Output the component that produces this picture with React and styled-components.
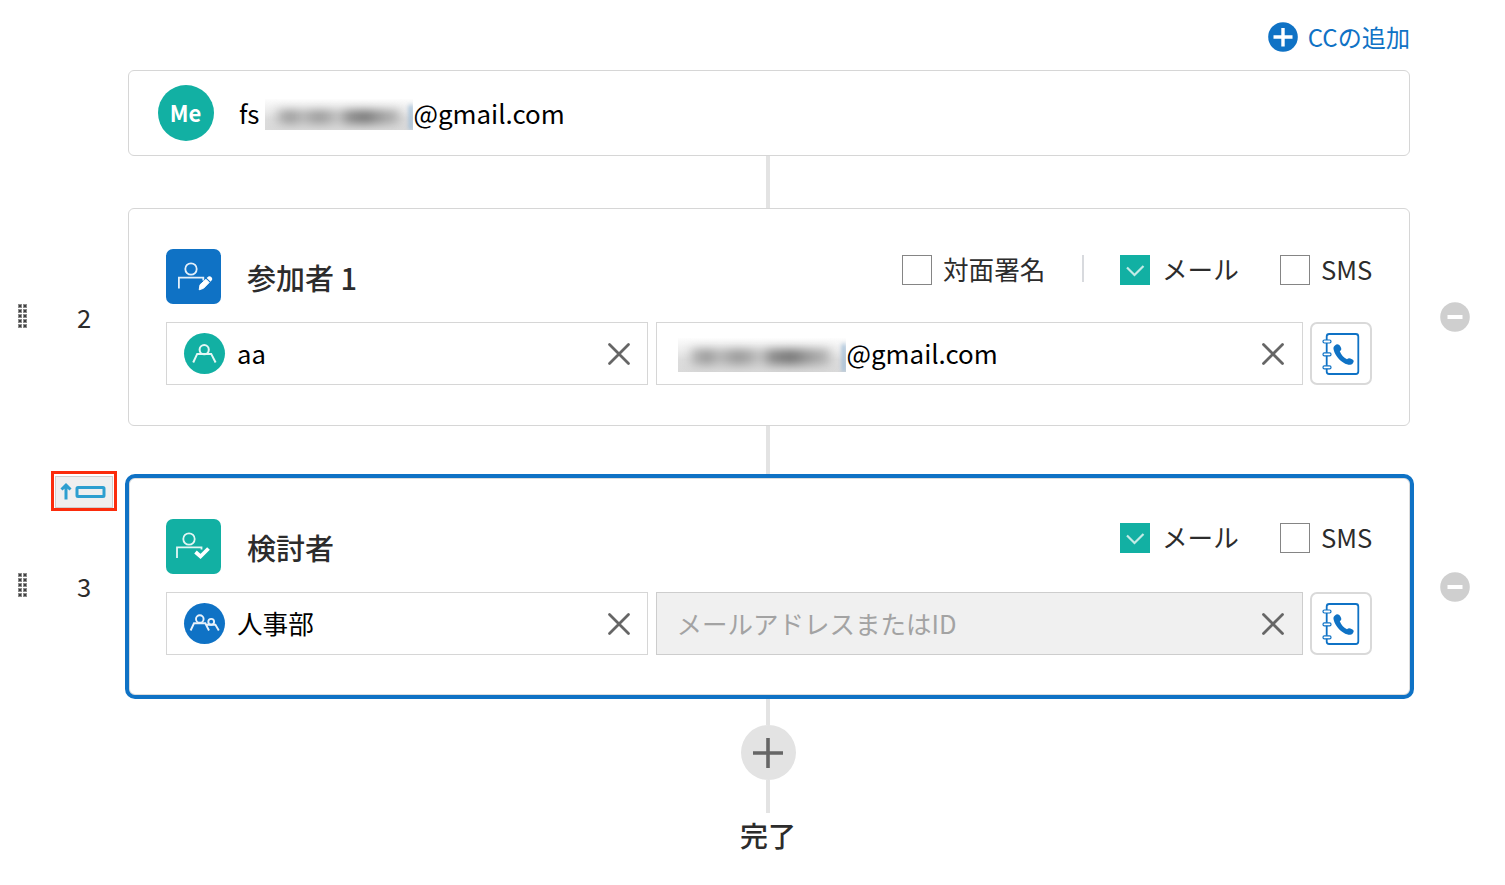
import React from 'react';
import styled, { createGlobalStyle } from 'styled-components';

const BLUE = '#0f72c5';
const TEAL = '#12b0a3';
const LINE = '#d6d6d6';

const GlobalStyle = createGlobalStyle`
  * { box-sizing: border-box; }
  body {
    margin: 0;
    background: #fff;
    color: #2c2c2c;
    font-family: "Noto Sans CJK JP", "Noto Sans", sans-serif;
    font-size: 25.6px;
    line-height: 38px;
  }
  svg { display: block; flex: none; }
`;

const Page = styled.main`
  width: 1505px;
  height: 885px;
  overflow: hidden;
`;

const TopBar = styled.header`
  display: flex;
  justify-content: flex-end;
  height: 70px;
  padding: 18px 95px 0 0;
`;

const AddCc = styled.a`
  display: flex;
  gap: 10px;
  height: 38px;
  align-items: center;
  color: ${BLUE};
  font-size: 24.1px;
`;

const Step = styled.section`
  position: relative;
  display: grid;
  grid-template-columns: 128px 1282px 95px;
  align-items: center;
`;

const Order = styled.div`
  display: flex;
  align-items: center;
  padding-left: 18px;
`;

const Grip = styled.div`
  display: grid;
  grid-template-columns: 4px 4px;
  gap: 1px;
  margin-top: -3px;
`;

const Dot = styled.i`
  width: 4px;
  height: 4px;
  border: 1px solid #8c8c8c;
  background: #3e3e3e;
`;

const StepNumber = styled.span`
  width: 26px;
  margin-left: 44px;
  padding-bottom: 1px;
  text-align: center;
`;

const Card = styled.div`
  grid-column: 2;
  height: ${(p) => p.$height}px;
  margin: ${(p) => (p.$active ? '0 -4px 0 -3px' : '0')};
  padding: ${(p) => (p.$active ? '41px 38px 0 37px' : '40px 37px 0')};
  border: ${(p) => (p.$active ? `4px solid ${BLUE}` : `1px solid ${LINE}`)};
  border-radius: ${(p) => (p.$active ? 10 : 6)}px;
  box-shadow: ${(p) => (p.$active ? 'inset 0 0 0 1px #dcdcdc' : 'none')};
`;

const OwnerCard = styled(Card)`
  display: flex;
  align-items: center;
  padding: 0 29px;
`;

const Avatar = styled.div`
  display: grid;
  place-items: center;
  flex: none;
  width: ${(p) => p.$size}px;
  height: ${(p) => p.$size}px;
  border-radius: 50%;
  background: ${(p) => p.$color};
  color: #fff;
  font-size: 22px;
  font-weight: 700;
  line-height: 36px;
`;

const Initials = styled.span`
  padding: 0 1px 2px 0;
`;

const OwnerText = styled.div`
  display: flex;
  margin-left: 25px;
  color: #000;
  font-size: 25.9px;
`;

const Redacted = styled.span`
  position: relative;
  width: ${(p) => p.$width}px;
  height: ${(p) => p.$height}px;
  margin: ${(p) => p.$margin};
  overflow: hidden;
  background: linear-gradient(#fdfdfd 0%, #ededed 35%, #dcdcdc 65%, #dadada 100%);
  &::before {
    content: '';
    position: absolute;
    inset: 35% 9% 20% 8%;
    background: linear-gradient(90deg, #bbb 0%, #999 12%, #bbb 20%, #999 34%, #aaa 42%, #c8c8c8 50%, #8c8c8c 58%, #777 72%, #999 84%, #bbb 100%);
    filter: blur(5px);
  }
  &::after {
    content: '';
    position: absolute;
    inset: 20% 0 0 auto;
    width: 4px;
    background: #9dbcd8;
    filter: blur(2px);
  }
`;

const Connector = styled.div`
  width: 4px;
  height: ${(p) => p.$height}px;
  margin-left: 766px;
  background: #e3e3e3;
`;

const CardHead = styled.div`
  display: flex;
  height: 55px;
`;

const RoleIcon = styled.div`
  width: 55px;
  height: 55px;
  border-radius: 7px;
  background: ${(p) => p.$color};
`;

const RoleTitle = styled.h2`
  margin: 7px auto 0 26px;
  font-size: 29px;
  font-weight: 500;
  line-height: 42px;
`;

const Options = styled.div`
  display: flex;
  align-items: center;
  height: 30px;
  margin-top: ${(p) => p.$top}px;
`;

const Option = styled.label`
  display: flex;
  align-items: center;
  gap: ${(p) => p.$gap || 12}px;
  width: ${(p) => p.$width}px;
  height: 30px;
  white-space: nowrap;
`;

const OptionText = styled.span`
  padding-bottom: 3px;
`;

const Box = styled.span`
  display: grid;
  place-items: center;
  flex: none;
  width: 30px;
  height: 30px;
  border: 1px solid ${(p) => (p.$checked ? TEAL : '#858585')};
  background: ${(p) => (p.$checked ? TEAL : '#fff')};
`;

const Divider = styled.i`
  width: 2px;
  height: 27px;
  margin: 0 36px 3px;
  background: #d8dade;
`;

const Fields = styled.div`
  display: grid;
  grid-template-columns: 482px 647px 62px;
  gap: 7.5px;
  height: 63px;
  margin-top: 18px;
`;

const Field = styled.div`
  display: flex;
  align-items: center;
  padding: 0 16.5px 0 ${(p) => p.$left}px;
  border: 1px solid ${(p) => (p.$disabled ? '#cdcdcd' : LINE)};
  background: ${(p) => (p.$disabled ? '#f0f0f0' : '#fff')};
  color: ${(p) => (p.$disabled ? '#a3a3a3' : '#000')};
  > svg { margin-left: auto; }
`;

const FieldText = styled.span`
  display: flex;
  margin-left: ${(p) => p.$left || 0}px;
  padding-bottom: 2px;
  font-size: ${(p) => p.$size || 25.6}px;
`;

const BookButton = styled.button`
  display: grid;
  place-items: center;
  padding: 0;
  border: 2px solid #d9d9d9;
  border-radius: 7px;
  background: #fff;
`;

const Remove = styled.div`
  grid-column: 3;
  margin-left: 30px;
`;

const MoveUp = styled.div`
  position: absolute;
  top: -3px;
  left: 51px;
  display: grid;
  width: 66px;
  height: 40px;
  border: 3px solid #fb2c0c;
  background: #fff;
  padding: 2px 1px 1px;
`;

const MoveUpFace = styled.div`
  border: 1px solid #cfcfcf;
  background: #efefef;
`;

const Finish = styled.footer`
  display: flex;
  flex-direction: column;
  align-items: center;
  width: 1536px;
`;

const FinishLine = styled.i`
  width: 4px;
  height: ${(p) => p.$height}px;
  background: #e3e3e3;
`;

const AddStep = styled.div`
  display: grid;
  place-items: center;
  width: 55px;
  height: 55px;
  border-radius: 50%;
  background: #e3e3e3;
`;

const FinishText = styled.strong`
  margin-top: 1px;
  font-size: 28px;
  font-weight: 500;
  line-height: 42px;
`;

const CircleSign = ({ color, plus }) => (
  <svg width="30" height="30" viewBox="0 0 30 30">
    <circle cx="15" cy="15" r="14.8" fill={color} />
    <path d={plus ? 'M5.5 15H24.5M15 6V24.5' : 'M7.5 15H22.5'} stroke="#fff" strokeWidth={plus ? 3.4 : 4} />
  </svg>
);

const Clear = () => (
  <svg width="24" height="24" viewBox="0 0 24 24" fill="none" stroke="#666" strokeWidth="2.8" strokeLinecap="round">
    <path d="M2.5 2.5 21.5 21.5M21.5 2.5 2.5 21.5" />
  </svg>
);

const Book = () => (
  <svg width="40" height="44" viewBox="0 0 40 44">
    <rect x="5.7" y="2" width="31.6" height="40" rx="2.5" fill="none" stroke={BLUE} strokeWidth="1.8" />
    {[8, 20.8, 33.8].map((y) => (
      <rect key={y} x="2" y={y} width="8" height="3" rx="1.4" fill="#fff" stroke={BLUE} strokeWidth="1.2" />
    ))}
    <path
      fill={BLUE}
      d="M14.2 13.2C16 11.5 18.2 12.4 19.4 14.6C20.7 17 20.8 17.8 18.8 19.2C20.2 23 22.5 25.5 26 27.3C27.5 25.9 28.6 26 31 27.3C33 28.4 33.3 29.6 31.7 31.4C29.8 33.5 26.9 33.1 23.4 31.3C18.2 28.4 14.2 23.4 12.8 18.3C12.1 15.8 12.5 14.4 14.2 13.2Z"
    />
  </svg>
);

const SignerIcon = () => (
  <svg width="55" height="55" viewBox="0 0 55 55" fill="none" stroke="#e4f0fa" strokeWidth="1.8">
    <circle cx="25" cy="20" r="5.7" />
    <path d="M12.9 39.5V28.7H37.3V31.5" />
    <path d="M34 35.8 40 30.3 43.2 33.5 37.5 39.3 33.2 40.8Z" fill="#fff" stroke="#fff" strokeWidth="1" />
    <path d="M41.7 29 42.8 28.1Q43.8 27.5 44.8 28.5T45.5 30.5L44.5 31.8Z" fill="#fff" stroke="#fff" strokeWidth="1.4" />
  </svg>
);

const ReviewerIcon = () => (
  <svg width="55" height="55" viewBox="0 0 55 55" fill="none" stroke="#e4f6f4" strokeWidth="1.8">
    <circle cx="23" cy="20" r="5.7" />
    <path d="M11 39V28.3H35.5V30.5" />
    <path d="M29.5 33 34.5 37.5 42.5 29.5" stroke="#fff" strokeWidth="3.8" />
  </svg>
);

const PersonIcon = () => (
  <svg width="41" height="41" viewBox="0 0 41 41" fill="none" stroke="#e5f7f5" strokeWidth="2">
    <circle cx="20.2" cy="16.7" r="4.6" />
    <path d="M9.2 29.5 13.2 20.9H27.2L31.6 29.5" />
  </svg>
);

const GroupIcon = () => (
  <svg width="41" height="41" viewBox="0 0 41 41" fill="none" stroke="#e8f2fb" strokeWidth="1.9">
    <circle cx="15.8" cy="16" r="3.8" />
    <circle cx="27.2" cy="18.8" r="2.9" />
    <path d="M6.6 27.5 10 20.3H21.3L25 27.5M22.5 21.8H31.4L34.8 27.5" />
  </svg>
);

function CheckOption({ label, checked, gap, width }) {
  return (
    <Option $gap={gap} $width={width}>
      <Box $checked={checked}>
        {checked && (
          <svg width="28" height="28" viewBox="0 0 28 28" fill="none" stroke="#c3ebe6" strokeWidth="2.2">
            <path d="M6 11.5 13.5 19 22.5 10" />
          </svg>
        )}
      </Box>
      <OptionText>{label}</OptionText>
    </Option>
  );
}

function StepOrder({ value }) {
  return (
    <Order>
      <Grip>
        {Array.from({ length: 10 }, (_, i) => <Dot key={i} />)}
      </Grip>
      <StepNumber>{value}</StepNumber>
    </Order>
  );
}

export default function App() {
  return (
    <Page>
      <GlobalStyle />
      <TopBar>
        <AddCc><CircleSign color={BLUE} plus />CCの追加</AddCc>
      </TopBar>

      <Step>
        <OwnerCard $height={86}>
          <Avatar $size={56} $color={TEAL}><Initials>Me</Initials></Avatar>
          <OwnerText>
            fs<Redacted $width={148} $height={31} $margin="5px 0 0 6px" />@gmail.com
          </OwnerText>
        </OwnerCard>
      </Step>
      <Connector $height={52} />

      <Step>
        <StepOrder value="2" />
        <Card $height={218}>
          <CardHead>
            <RoleIcon $color={BLUE}><SignerIcon /></RoleIcon>
            <RoleTitle>参加者 1</RoleTitle>
            <Options $top={6}>
              <CheckOption label="対面署名" gap={11} width={144} />
              <Divider />
              <CheckOption label="メール" checked width={160} />
              <CheckOption label="SMS" gap={11} width={92} />
            </Options>
          </CardHead>
          <Fields>
            <Field $left={17}>
              <Avatar $size={41} $color={TEAL}><PersonIcon /></Avatar>
              <FieldText $left={12}>aa</FieldText>
              <Clear />
            </Field>
            <Field $left={21}>
              <FieldText $size={25.9}>
                <Redacted $width={168} $height={34} $margin="4px 1px 0 0" />@gmail.com
              </FieldText>
              <Clear />
            </Field>
            <BookButton><Book /></BookButton>
          </Fields>
        </Card>
        <Remove><CircleSign color="#cfcfcf" /></Remove>
      </Step>
      <Connector $height={48} />

      <Step>
        <StepOrder value="3" />
        <MoveUp>
          <MoveUpFace>
            <svg width="54" height="30" viewBox="0 0 54 30" fill="none" stroke="#2d9fd0" strokeWidth="3">
              <path d="M10 22.5V9.5M5.5 12.5 10 8 14.5 12.5" />
              <rect x="21" y="10.5" width="27" height="9" rx="1" />
            </svg>
          </MoveUpFace>
        </MoveUp>
        <Card $active $height={225}>
          <CardHead>
            <RoleIcon $color={TEAL}><ReviewerIcon /></RoleIcon>
            <RoleTitle>検討者</RoleTitle>
            <Options $top={4}>
              <CheckOption label="メール" checked width={160} />
              <CheckOption label="SMS" gap={11} width={92} />
            </Options>
          </CardHead>
          <Fields>
            <Field $left={17}>
              <Avatar $size={41} $color={BLUE}><GroupIcon /></Avatar>
              <FieldText $left={12}>人事部</FieldText>
              <Clear />
            </Field>
            <Field $left={20} $disabled>
              <FieldText $size={25.5}>メールアドレスまたはID</FieldText>
              <Clear />
            </Field>
            <BookButton><Book /></BookButton>
          </Fields>
        </Card>
        <Remove><CircleSign color="#cfcfcf" /></Remove>
      </Step>

      <Finish>
        <FinishLine $height={26} />
        <AddStep>
          <svg width="30" height="30" viewBox="0 0 30 30" stroke="#666" strokeWidth="3.6">
            <path d="M0 15H30M15 0V30" />
          </svg>
        </AddStep>
        <FinishLine $height={33} />
        <FinishText>完了</FinishText>
      </Finish>
    </Page>
  );
}
